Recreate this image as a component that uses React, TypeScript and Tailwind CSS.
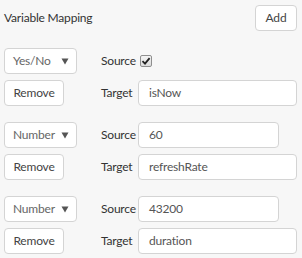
import React from "react";

function Select({ value }: { value: string }) {
  return (
    <div className="flex h-[26px] w-[73px] shrink-0 items-center justify-between rounded-[4px] border border-[#d4d4d4] bg-white pl-[8px] pr-[6px] text-[#666]">
      <span>{value}</span>
      <svg width="8" height="7" viewBox="0 0 8 7" className="mr-[1px]">
        <path d="M0.5 0.5 L7.5 0.5 L4 6.5 Z" fill="#555" />
      </svg>
    </div>
  );
}

function Btn({ label, w }: { label: string; w: string }) {
  return (
    <button className={`flex h-[26px] ${w} items-center justify-center rounded-[4px] border border-[#d4d4d4] bg-white text-[#444]`}>
      {label}
    </button>
  );
}

function Input({ value, w }: { value: string; w: string }) {
  return (
    <div className={`flex h-[26px] ${w} items-center rounded-[4px] border border-[#d4d4d4] bg-white pl-[10px] text-[#555]`}>
      {value}
    </div>
  );
}

function Check() {
  return (
    <span className="ml-[4px] inline-flex h-[12px] w-[12px] items-center justify-center rounded-[2px] border border-[#8f8f8f] bg-gradient-to-b from-[#f4f4f4] to-[#dcdcdc]">
      <svg width="10" height="10" viewBox="0 0 10 10">
        <path d="M1.5 5.2 L4 7.6 L8.6 2.2" stroke="#222" strokeWidth="1.8" fill="none" />
      </svg>
    </span>
  );
}

function Group({ type, source, target, isCheck }: { type: string; source: string; target: string; isCheck?: boolean }) {
  return (
    <div className="flex flex-col gap-[6px]">
      <div className="flex items-center">
        <div className="w-[97px] shrink-0">
          <Select value={type} />
        </div>
        {isCheck ? (
          <div className="flex items-center text-[#333]">
            <span>Source</span>
            <Check />
          </div>
        ) : (
          <>
            <span className="w-[37px] shrink-0 whitespace-nowrap text-[#333]">Source</span>
            <Input value={source} w="w-[141px]" />
          </>
        )}
      </div>
      <div className="flex items-center">
        <div className="w-[97px] shrink-0">
          <Btn label="Remove" w="w-[60px]" />
        </div>
        <span className="w-[37px] shrink-0 whitespace-nowrap text-[#333]">Target</span>
        <Input value={target} w="flex-1" />
      </div>
    </div>
  );
}

export default function App() {
  return (
    <div
      className="flex h-[258px] w-[302px] flex-col bg-[#f7f7f7] pl-[4px] pr-[5px] pt-[5px] text-[12px] tracking-[-0.2px]"
      style={{ fontFamily: 'Lato, "Noto Sans", sans-serif' }}
    >
      <div className="flex items-center justify-between">
        <span className="text-[#333]">Variable Mapping</span>
        <Btn label="Add" w="w-[42px]" />
      </div>
      <div className="mt-[17px] flex flex-col gap-[16px]">
        <Group type="Yes/No" source="" target="isNow" isCheck />
        <Group type="Number" source="60" target="refreshRate" />
        <Group type="Number" source="43200" target="duration" />
      </div>
    </div>
  );
}
